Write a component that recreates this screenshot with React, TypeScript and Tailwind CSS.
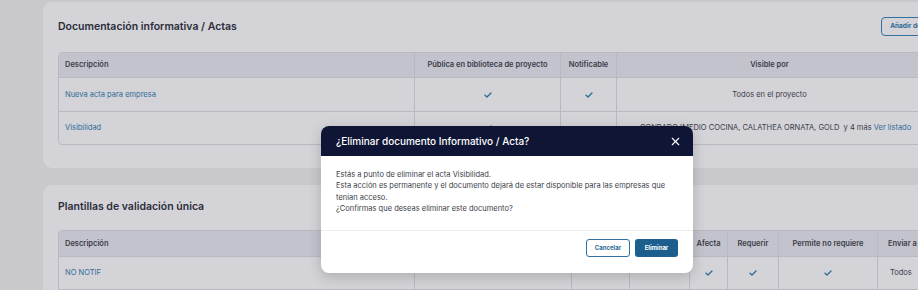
import { X } from "lucide-react";

function Check() {
  return (
    <svg width="8" height="6" viewBox="0 0 8 6" className="inline-block">
      <path d="M1 3.2 L3 5 L7 1" fill="none" stroke="#2f6a96" strokeWidth="1.3" strokeLinecap="round" strokeLinejoin="round" />
    </svg>
  );
}

const th = "flex items-center border-l border-[#b9b9c1] first:border-l-0 text-[7.5px] font-semibold text-[#3a3c48]";
const cell = "flex items-center border-l border-[#b9b9c1] first:border-l-0 text-[7.5px]";
const td = `${cell} text-[#3a3c48]`;
const link = `${cell} pl-[6px] text-[#2f6c99]`;

export default function App() {
  return (
    <div
      className="relative w-[918px] h-[290px] overflow-hidden bg-[#c8c8cd]"
      style={{ fontFamily: "Inter, 'Noto Sans', sans-serif" }}
    >
      <div className="flex flex-col gap-[17px] pt-[2px] pl-[43px]">
        {/* Documentación informativa */}
        <div className="w-[895px] rounded-[9px] bg-[#d3d3d8] px-[15px] pt-[15px] pb-[23px]">
          <div className="flex h-[19px] items-center justify-between">
            <h2 className="text-[10.5px] font-semibold text-[#2b2d3a]">Documentación informativa / Actas</h2>
            <button className="mr-[-35px] h-[19px] whitespace-nowrap rounded-[4px] border-[1.5px] border-[#33709b] px-[8px] text-[6.5px] font-bold text-[#2d6a96]">
              Añadir documento
            </button>
          </div>
          <div className="mt-[16px] overflow-hidden rounded-[4px] border border-[#b9b9c1]">
            <div className="grid h-[24px] grid-cols-[355px_146px_56px_1fr] bg-[#c3c3cd]">
              <div className={`${th} pl-[6px]`}>Descripción</div>
              <div className={`${th} justify-center`}>Pública en biblioteca de proyecto</div>
              <div className={`${th} justify-center`}>Notificable</div>
              <div className={`${th} justify-center`}>Visible por</div>
            </div>
            <div className="grid h-[34px] grid-cols-[355px_146px_56px_1fr] border-t border-[#b9b9c1]">
              <div className={link}>Nueva acta para empresa</div>
              <div className={`${td} justify-center`}><Check /></div>
              <div className={`${td} justify-center`}><Check /></div>
              <div className={`${td} justify-center`}>Todos en el proyecto</div>
            </div>
            <div className="grid h-[33px] grid-cols-[355px_146px_56px_1fr] border-t border-[#b9b9c1]">
              <div className={link}>Visibilidad</div>
              <div className={`${td} justify-center`}><Check /></div>
              <div className={`${td} justify-center`}></div>
              <div className={`${td} pl-[23px]`}>
                CONRADO IMEDIO COCINA, CALATHEA ORNATA, GOLD&nbsp; y 4 más&nbsp;<span className="text-[#2f6c99]">Ver listado</span>
              </div>
            </div>
          </div>
        </div>

        {/* Plantillas de validación única */}
        <div className="w-[895px] rounded-[9px] bg-[#d3d3d8] px-[15px] pt-[15px] pb-[23px]">
          <div className="flex h-[14px] items-center">
            <h2 className="text-[10.5px] font-semibold text-[#2b2d3a]">Plantillas de validación única</h2>
          </div>
          <div className="mt-[16px] overflow-hidden rounded-[4px] border border-[#b9b9c1]">
            <div className="grid h-[25px] grid-cols-[355px_157px_58px_60px_38px_51px_99px_1fr] bg-[#c3c3cd]">
              <div className={`${th} pl-[6px]`}>Descripción</div>
              <div className={th}></div>
              <div className={th}></div>
              <div className={th}></div>
              <div className={`${th} justify-center`}>Afecta</div>
              <div className={`${th} justify-center`}>Requerir</div>
              <div className={`${th} justify-center`}>Permite no requiere</div>
              <div className={`${th} pl-[10px]`}>Enviar a</div>
            </div>
            <div className="grid h-[33px] grid-cols-[355px_157px_58px_60px_38px_51px_99px_1fr] border-t border-[#b9b9c1]">
              <div className={link}>NO NOTIF</div>
              <div className={td}></div>
              <div className={td}></div>
              <div className={td}></div>
              <div className={`${td} justify-center`}><Check /></div>
              <div className={`${td} justify-center`}><Check /></div>
              <div className={`${td} justify-center`}><Check /></div>
              <div className={`${td} pl-[12px]`}>Todos</div>
            </div>
            <div className="h-[34px] border-t border-[#b9b9c1]" />
          </div>
        </div>
      </div>

      {/* Modal */}
      <div className="absolute left-[321px] top-[126px] w-[372px] overflow-hidden rounded-[8px] bg-white shadow-[0_4px_14px_rgba(0,0,0,0.18)]">
        <div className="flex h-[30px] items-center justify-between bg-[#0e1535] pl-[15px] pr-[11px]">
          <h3 className="text-[10px] font-medium text-white">¿Eliminar documento Informativo / Acta?</h3>
          <X size={13} color="#ffffff" strokeWidth={2} />
        </div>
        <div className="px-[15px] pt-[13px] pb-[15px] text-[7.5px] leading-[11.4px] text-[#3b3e49]">
          <p>Estás a punto de eliminar el acta Visibilidad.</p>
          <p>Esta acción es permanente y el documento dejará de estar disponible para las empresas que tenían acceso.</p>
          <p>¿Confirmas que deseas eliminar este documento?</p>
        </div>
        <div className="flex justify-end gap-[5px] border-t border-[#eeeef1] px-[15px] pt-[8px] pb-[16px]">
          <button className="flex h-[18px] w-[44px] items-center justify-center whitespace-nowrap rounded-[3px] border border-[#33709b] bg-white text-[6px] font-bold text-[#2d6a96]">
            Cancelar
          </button>
          <button className="flex h-[18px] w-[43px] items-center justify-center whitespace-nowrap rounded-[3px] bg-[#1c5f8f] text-[6px] font-bold text-white">
            Eliminar
          </button>
        </div>
      </div>
    </div>
  );
}
